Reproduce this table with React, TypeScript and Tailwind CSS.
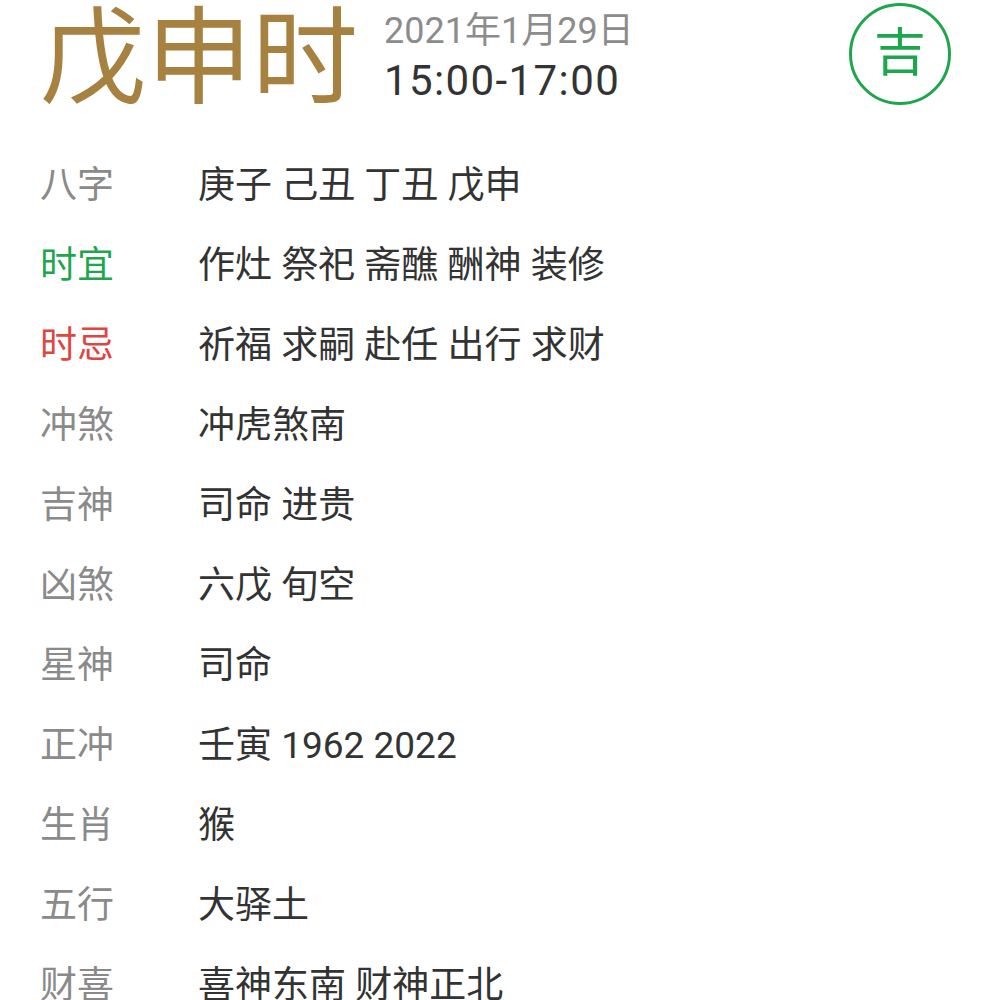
const rows: { label: string; value: string; color: string }[] = [
  { label: '八字', value: '庚子 己丑 丁丑 戊申', color: 'text-[#8a8a8a]' },
  { label: '时宜', value: '作灶 祭祀 斋醮 酬神 装修', color: 'text-[#1ea64c]' },
  { label: '时忌', value: '祈福 求嗣 赴任 出行 求财', color: 'text-[#e0453f]' },
  { label: '冲煞', value: '冲虎煞南', color: 'text-[#8a8a8a]' },
  { label: '吉神', value: '司命 进贵', color: 'text-[#8a8a8a]' },
  { label: '凶煞', value: '六戊 旬空', color: 'text-[#8a8a8a]' },
  { label: '星神', value: '司命', color: 'text-[#8a8a8a]' },
  { label: '正冲', value: '壬寅 1962 2022', color: 'text-[#8a8a8a]' },
  { label: '生肖', value: '猴', color: 'text-[#8a8a8a]' },
  { label: '五行', value: '大驿土', color: 'text-[#8a8a8a]' },
  { label: '财喜', value: '喜神东南 财神正北', color: 'text-[#8a8a8a]' },
]

export default function App() {
  return (
    <div
      className="w-[989px] h-[1000px] overflow-hidden bg-white"
      style={{ fontFamily: 'Roboto, "Noto Sans CJK SC", sans-serif' }}
    >
      {/* header */}
      <div className="flex items-start h-[145px] pl-[40px] pr-[38px]">
        <div className="text-[106px] leading-[118px] text-[#a7813f]">戊申时</div>
        <div className="ml-[26px] mt-[7px] flex flex-col">
          <span className="text-[36px] leading-[48px] text-[#8c8c8c]">2021年1月29日</span>
          <span className="text-[42px] leading-[52px] tracking-[1.4px] text-[#333333]">15:00-17:00</span>
        </div>
        <div className="ml-auto mt-[3px] w-[102px] h-[102px] rounded-full border-[3px] border-[#1ea64c] flex items-center justify-center">
          <span className="text-[52px] leading-none text-[#1ea64c]">吉</span>
        </div>
      </div>

      {/* rows */}
      <div className="flex flex-col">
        {rows.map((r) => (
          <div key={r.label} className="flex items-center h-[80px] pl-[40px]">
            <span className={`w-[158px] text-[37px] leading-none ${r.color}`}>{r.label}</span>
            <span className="text-[37px] leading-none text-[#333333]">{r.value}</span>
          </div>
        ))}
      </div>
    </div>
  )
}
